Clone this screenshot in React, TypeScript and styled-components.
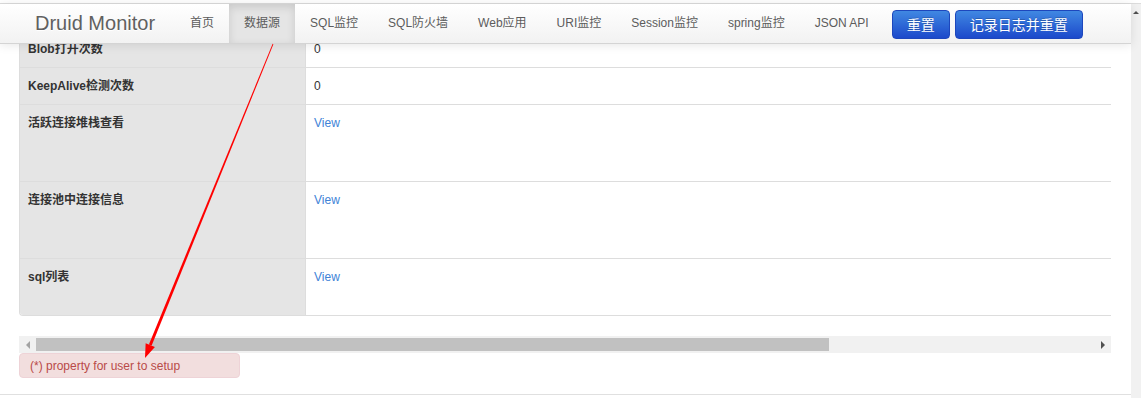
import styled, { createGlobalStyle } from "styled-components";

const GlobalStyle = createGlobalStyle`
  body {
    margin: 0;
    background: #fff;
    font-family: "Liberation Sans", "Noto Sans CJK SC", sans-serif;
    font-size: 12px;
    color: #333;
  }
`;

const Page = styled.div`
  position: relative;
  width: 1141px;
  height: 398px;
  padding-top: 3px;
  box-sizing: border-box;
  overflow: hidden;
`;

const Frame = styled.div`
  display: flex;
  align-items: flex-start;
  height: 395px;
  border-top: 1px solid #dcdcdc;
  box-sizing: border-box;
`;

const Main = styled.div`
  flex: 1;
  min-width: 0;
  height: 391px;
  display: flex;
  flex-direction: column;
  border-bottom: 1px solid #e0e0e0;
  box-sizing: border-box;
`;

const Navbar = styled.div`
  position: relative;
  z-index: 2;
  height: 40px;
  flex: none;
  display: flex;
  align-items: stretch;
  padding-left: 15px;
  background: linear-gradient(to bottom, #ffffff, #f2f2f2);
  border-bottom: 1px solid #d4d4d4;
  box-shadow: 0 1px 10px rgba(0, 0, 0, 0.1);
  box-sizing: border-box;
`;

const Brand = styled.div`
  padding: 0 20px;
  font-size: 20px;
  line-height: 39px;
  color: #606060;
  text-shadow: 0 1px 0 #fff;
`;

const NavItem = styled.div<{ $active?: boolean }>`
  padding: 0 15px;
  line-height: 39px;
  font-size: 12px;
  color: #5c5c5c;
  white-space: nowrap;
  background: ${(p) => (p.$active ? "#e5e5e5" : "transparent")};
  box-shadow: ${(p) => (p.$active ? "inset 0 3px 8px rgba(0,0,0,0.125)" : "none")};
`;

const Button = styled.div<{ $first?: boolean }>`
  align-self: flex-start;
  margin-top: 6px;
  margin-left: ${(p) => (p.$first ? "8px" : "5px")};
  padding: 4px 14px 3px;
  font-size: 14px;
  line-height: 20px;
  color: #fff;
  background: linear-gradient(to bottom, #4088e2, #1c49cb);
  border: 1px solid #1d47bd;
  border-radius: 4px;
  text-shadow: 0 -1px 0 rgba(0, 0, 0, 0.2);
`;

const Content = styled.div`
  flex: 1;
  min-width: 0;
  overflow: hidden;
  padding: 0 20px 0 19px;
`;

const Clip = styled.div`
  margin-top: -14px;
  overflow: hidden;
`;

const Table = styled.div`
  width: 1200px;
  border-left: 1px solid #ddd;
  border-bottom: 1px solid #ddd;
  border-bottom-left-radius: 4px;
  overflow: hidden;
`;

const Row = styled.div`
  display: flex;
  border-top: 1px solid #ddd;
`;

const Label = styled.div<{ $h: number }>`
  width: 285px;
  flex: none;
  box-sizing: border-box;
  height: ${(p) => p.$h + 16}px;
  padding: 8px;
  background: #e5e5e5;
  font-weight: bold;
  line-height: 20px;
`;

const Value = styled.div`
  flex: 1;
  padding: 8px;
  line-height: 20px;
  border-left: 1px solid #ddd;
`;

const Link = styled.a`
  color: #4183d7;
  text-decoration: none;
`;

const HScroll = styled.div`
  margin-top: 20px;
  height: 17px;
  display: flex;
  align-items: center;
  background: #f1f1f1;
`;

const ArrowBtn = styled.div<{ $dir: "left" | "right"; $dim?: boolean }>`
  width: 17px;
  height: 17px;
  flex: none;
  display: flex;
  align-items: center;
  justify-content: center;
  &::before {
    content: "";
    border-top: 4px solid transparent;
    border-bottom: 4px solid transparent;
    ${(p) =>
      p.$dir === "left"
        ? `border-right: 4px solid ${p.$dim ? "#a3a3a3" : "#505050"};`
        : `border-left: 4px solid ${p.$dim ? "#a3a3a3" : "#505050"};`}
  }
`;

const Track = styled.div`
  flex: 1;
  height: 13px;
`;

const Thumb = styled.div`
  width: 793px;
  height: 100%;
  background: #c1c1c1;
`;

const Alert = styled.div`
  display: inline-block;
  padding: 3px 59px 1px 10px;
  line-height: 19px;
  color: #b94a48;
  background: #f2dede;
  border: 1px solid #eed3d7;
  border-radius: 4px;
`;

const VScroll = styled.div`
  width: 10px;
  height: 394px;
  flex: none;
  background: #f1f1f1;
  display: flex;
  justify-content: center;
  padding-top: 7px;
  box-sizing: border-box;
  &::before {
    content: "";
    height: 0;
    border-left: 3px solid transparent;
    border-right: 3px solid transparent;
    border-bottom: 3px solid #505050;
  }
`;

const Overlay = styled.svg`
  position: absolute;
  left: 0;
  top: 0;
  pointer-events: none;
  z-index: 5;
`;

const navItems = ["首页", "数据源", "SQL监控", "SQL防火墙", "Web应用", "URI监控", "Session监控", "spring监控", "JSON API"];

const rows: { label: string; value: string; link?: boolean; h: number }[] = [
  { label: "Blob打开次数", value: "0", h: 20 },
  { label: "KeepAlive检测次数", value: "0", h: 20 },
  { label: "活跃连接堆栈查看", value: "View", link: true, h: 60 },
  { label: "连接池中连接信息", value: "View", link: true, h: 60 },
  { label: "sql列表", value: "View", link: true, h: 40 },
];

// tapered red annotation arrow
const tip = { x: 145, y: 358 };
const start = { x: 273, y: 44 };

export default function App() {
  const dx = tip.x - start.x;
  const dy = tip.y - start.y;
  const len = Math.hypot(dx, dy);
  const ux = dx / len;
  const uy = dy / len;
  const px = -uy;
  const py = ux;
  const base = { x: tip.x - ux * 14, y: tip.y - uy * 14 };
  const w0 = 0.4;
  const w1 = 1.5;
  const shaft = [
    [start.x + px * w0, start.y + py * w0],
    [base.x + px * w1, base.y + py * w1],
    [base.x - px * w1, base.y - py * w1],
    [start.x - px * w0, start.y - py * w0],
  ]
    .map((p) => p.join(","))
    .join(" ");
  const head = [
    [tip.x, tip.y],
    [base.x + px * 5, base.y + py * 5],
    [base.x - px * 5, base.y - py * 5],
  ]
    .map((p) => p.join(","))
    .join(" ");

  return (
    <Page>
      <GlobalStyle />
      <Frame>
        <Main>
          <Navbar>
            <Brand>Druid Monitor</Brand>
            {navItems.map((n) => (
              <NavItem key={n} $active={n === "数据源"}>
                {n}
              </NavItem>
            ))}
            <Button $first>重置</Button>
            <Button>记录日志并重置</Button>
          </Navbar>
          <Content>
            <Clip>
              <Table>
                {rows.map((r) => (
                  <Row key={r.label}>
                    <Label $h={r.h}>{r.label}</Label>
                    <Value>{r.link ? <Link href="#">{r.value}</Link> : r.value}</Value>
                  </Row>
                ))}
              </Table>
            </Clip>
            <HScroll>
              <ArrowBtn $dir="left" $dim />
              <Track>
                <Thumb />
              </Track>
              <ArrowBtn $dir="right" />
            </HScroll>
            <Alert>(*) property for user to setup</Alert>
          </Content>
        </Main>
        <VScroll />
      </Frame>
      <Overlay width={1141} height={398}>
        <polygon points={shaft} fill="#ff0000" />
        <polygon points={head} fill="#ff0000" />
      </Overlay>
    </Page>
  );
}
